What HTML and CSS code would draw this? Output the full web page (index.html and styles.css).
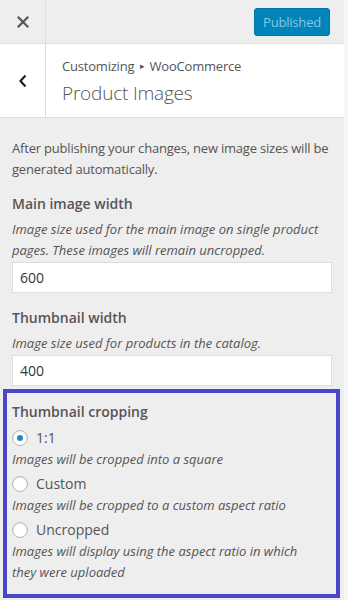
FILE: index.html
```html
<!DOCTYPE html>
<html lang="en">
<head>
  <meta charset="UTF-8">
  <meta name="viewport" content="width=device-width, initial-scale=1">
  <title>Customizing - Product Images</title>
  <link rel="stylesheet" href="styles.css">
</head>
<body>

  <div class="customizer">
    <header class="topbar">
      <button class="close-btn" aria-label="Close">
        <svg width="12" height="12" viewBox="0 0 12 12"><path d="M1.5 1.5 L10.5 10.5 M10.5 1.5 L1.5 10.5" stroke="#555" stroke-width="2.2" stroke-linecap="square"/></svg>
      </button>
      <button class="publish-btn" disabled>Published</button>
    </header>

    <div class="section-title">
      <button class="back-btn" aria-label="Back">
        <svg width="10" height="14" viewBox="0 0 10 14"><path d="M7.5 1.5 L2.5 7 L7.5 12.5" fill="none" stroke="#222" stroke-width="2.2"/></svg>
      </button>
      <div class="title-text">
        <span class="crumb">Customizing <span class="arrow">&#9656;</span> WooCommerce</span>
        <h3>Product Images</h3>
      </div>
    </div>

    <div class="controls">
      <p class="notice">After publishing your changes, new image sizes will be generated automatically.</p>

      <div class="control">
        <label class="control-title">Main image width</label>
        <span class="description">Image size used for the main image on single product pages. These images will remain uncropped.</span>
        <input type="text" value="600">
      </div>

      <div class="control">
        <label class="control-title">Thumbnail width</label>
        <span class="description">Image size used for products in the catalog.</span>
        <input type="text" value="400">
      </div>

      <div class="control highlight">
        <span class="control-title">Thumbnail cropping</span>
        <label class="radio"><span class="circle checked"></span>1:1</label>
        <span class="description">Images will be cropped into a square</span>
        <label class="radio"><span class="circle"></span>Custom</label>
        <span class="description">Images will be cropped to a custom aspect ratio</span>
        <label class="radio"><span class="circle"></span>Uncropped</label>
        <span class="description">Images will display using the aspect ratio in which they were uploaded</span>
      </div>
    </div>
  </div>

</body>
</html>
```

FILE: styles.css
```css
body {
  margin: 0;
  background-color: #f7f7f7;
  font-family: "Open Sans", Arial, sans-serif;
  color: #555;
}
.customizer {
  width: 344px;
  min-height: 600px;
  background-color: #eee;
}
.topbar {
  display: flex;
  justify-content: space-between;
  align-items: center;
  height: 43px;
  border-bottom: 1px solid #ddd;
}
.close-btn, .back-btn {
  width: 46px;
  height: 100%;
  background: none;
  border: none;
  border-right: 1px solid #ddd;
  display: flex;
  align-items: center;
  justify-content: center;
  padding: 0;
}
.publish-btn {
  margin-right: 14px;
  height: 28px;
  padding: 0 8px;
  background-color: #0085ba;
  color: #8cc6df;
  border: 1px solid #0073aa;
  border-radius: 3px;
  font-family: inherit;
  font-size: 13px;
  letter-spacing: -0.2px;
}
.section-title {
  display: flex;
  height: 73px;
  background: #fff;
  border-bottom: 1px solid #ddd;
}
.title-text {
  padding: 13px 0 0 16px;
}
.crumb {
  display: block;
  font-size: 13px;
  line-height: 18px;
  letter-spacing: -0.2px;
  color: #555;
}
.arrow {
  font-size: 9px;
  vertical-align: 2px;
  padding: 0 2px;
}
h3 {
  margin: 5px 0 0;
  font-size: 19px;
  font-weight: 300;
  line-height: 26px;
  letter-spacing: -0.2px;
  color: #555;
}
.controls {
  padding: 20px 12px 0;
}
.notice {
  margin: 0 0 12px;
  font-size: 13px;
  line-height: 21px;
  letter-spacing: -0.2px;
}
.control {
  margin-bottom: 13px;
}
.control-title {
  display: block;
  font-size: 14px;
  font-weight: 600;
  line-height: 24px;
  margin-bottom: 3px;
}
.description {
  display: block;
  font-size: 13px;
  font-style: italic;
  line-height: 21px;
}
.control input {
  display: block;
  box-sizing: border-box;
  width: 320px;
  height: 31px;
  margin-top: 1px;
  padding: 0 7px;
  border: 1px solid #ddd;
  background: #fff;
  font-family: inherit;
  font-size: 14px;
  color: #32373c;
}
.highlight {
  margin: -10px -8px 0 -9px;
  padding: 7px 5px 11px;
  border: 4px solid #4a45c9;
}
.highlight .control-title {
  margin-bottom: 1px;
}
.highlight .description {
  max-width: 300px;
}
.radio {
  display: flex;
  align-items: center;
  gap: 8px;
  font-size: 14px;
  line-height: 22px;
  margin-top: 3px;
}
.circle {
  box-sizing: border-box;
  width: 16px;
  height: 16px;
  border-radius: 50%;
  border: 1px solid #b4b9be;
  background: #fff;
  box-shadow: inset 0 1px 2px rgba(0, 0, 0, 0.1);
  display: flex;
  align-items: center;
  justify-content: center;
}
.circle.checked::after {
  content: "";
  width: 6px;
  height: 6px;
  border-radius: 50%;
  background: #1e8cbe;
}
```
